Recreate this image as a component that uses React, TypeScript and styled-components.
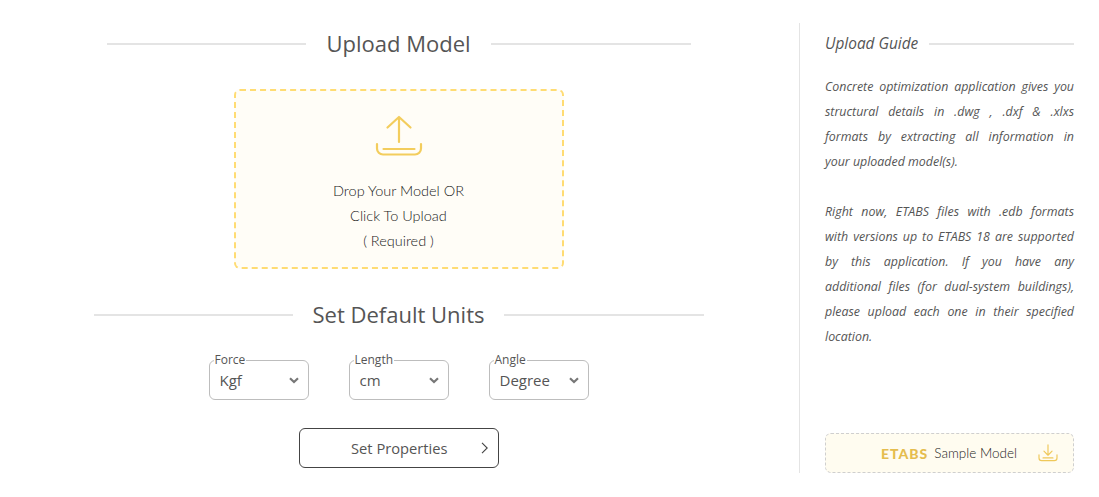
import * as React from 'react';
import styled, { createGlobalStyle } from 'styled-components';

const GlobalStyle = createGlobalStyle`
  html, body { margin: 0; padding: 0; background: #fff; }
  body { font-family: "Open Sans", "Liberation Sans", sans-serif; color: #555; }
  * { box-sizing: border-box; }
`;

const Page = styled.div`
  width: 1099px;
  height: 497px;
  display: flex;
  align-items: flex-start;
  padding-top: 23px;
`;

const Main = styled.main`
  width: 799px;
  height: 450px;
  padding-right: 2px;
  display: flex;
  flex-direction: column;
  align-items: center;
`;

const Heading = styled.div<{ $width: number; $top: number }>`
  width: ${(p) => p.$width}px;
  height: 42px;
  margin-top: ${(p) => p.$top}px;
  display: flex;
  align-items: center;
  justify-content: center;
  gap: 20px;
  color: #555;
  white-space: nowrap;
  &::before,
  &::after {
    content: '';
    flex: 1;
    height: 2px;
    background: #e4e4e4;
  }
`;

const HeadingText = styled.span`
  margin-top: -2px;
  font-size: 22px;
  line-height: 40px;
`;

const DropZone = styled.div`
  width: 330px;
  height: 180px;
  margin-top: 24px;
  padding-top: 24px;
  display: flex;
  flex-direction: column;
  align-items: center;
  background: #fffdf7;
  border: 2px dashed #ffdc73;
  border-radius: 6px;
`;

const DropText = styled.div`
  margin-top: 21px;
  font-family: "Lato", "Liberation Sans", sans-serif;
  font-size: 14.5px;
  font-weight: 300;
  line-height: 25px;
  color: #222;
  text-align: center;
`;

const SelectRow = styled.div`
  display: flex;
  gap: 40px;
  margin-top: 24px;
`;

const SelectBox = styled.div`
  position: relative;
  width: 100px;
  height: 40px;
  display: flex;
  align-items: center;
  justify-content: space-between;
  padding: 0 9px 0 10px;
  border: 1px solid #bdbdbd;
  border-radius: 6px;
  font-size: 15px;
  color: #555;
`;

const SelectLabel = styled.span`
  position: absolute;
  top: -9px;
  left: 4px;
  padding: 0 1px;
  background: #fff;
  font-size: 12px;
  line-height: 15px;
  color: #555;
`;

const SetButton = styled.button`
  width: 200px;
  height: 40px;
  margin-top: 28px;
  padding: 0 10px 0 0;
  display: flex;
  align-items: center;
  justify-content: flex-end;
  gap: 33px;
  background: #fff;
  border: 1px solid #444;
  border-radius: 6px;
  font-family: inherit;
  font-size: 14.7px;
  color: #555;
`;

const Guide = styled.aside`
  width: 275px;
  height: 450px;
  padding-left: 25px;
  display: flex;
  flex-direction: column;
  border-left: 1px solid #e4e4e4;
`;

const GuideTitle = styled.div`
  height: 42px;
  margin-top: -1px;
  display: flex;
  align-items: center;
  gap: 11px;
  font-size: 15.4px;
  font-style: italic;
  color: #555;
  white-space: nowrap;
  &::after {
    content: '';
    flex: 1;
    height: 2px;
    margin-top: 2px;
    background: #e4e4e4;
  }
`;

const GuideText = styled.p<{ $top: number }>`
  margin: ${(p) => p.$top}px 0 0;
  font-size: 12.4px;
  font-style: italic;
  line-height: 25px;
  color: #555;
`;

const GuideLine = styled.span<{ $last?: boolean }>`
  display: block;
  white-space: nowrap;
  text-align: ${(p) => (p.$last ? 'left' : 'justify')};
  text-align-last: ${(p) => (p.$last ? 'left' : 'justify')};
`;

const SampleCard = styled.div`
  margin-top: auto;
  height: 40px;
  padding: 0 15px 0 55px;
  display: flex;
  align-items: center;
  background: #fffcf0;
  border: 1px dashed #cfcfcf;
  border-radius: 6px;
`;

const EtabsMark = styled.span`
  font-family: "Lato", "Liberation Sans", sans-serif;
  font-size: 14px;
  font-weight: 900;
  letter-spacing: 1px;
  color: #e5bd4e;
`;

const SampleText = styled.span`
  margin-left: 6px;
  flex: 1;
  font-family: "Lato", "Liberation Sans", sans-serif;
  font-size: 13.5px;
  font-weight: 300;
  color: #222;
`;

const UploadIcon = () => (
  <svg width="48" height="42" viewBox="0 0 48 42" fill="none" stroke="#f3cd5d" strokeWidth="2.2" strokeLinecap="round" strokeLinejoin="round">
    <path d="M24 27V2M12.500 12.500 24 2l11.500 10.500" />
    <path d="M2 29v4.500a6 6 0 0 0 6 6h32a6 6 0 0 0 6-6V29" />
    <path d="M8.500 34h31" />
  </svg>
);

const DownloadIcon = () => (
  <svg width="20" height="18" viewBox="0 0 22 20" fill="none" stroke="#efc85a" strokeWidth="1.3" strokeLinecap="round" strokeLinejoin="round">
    <path d="M11 1v11M6.500 8 11 12.500 15.500 8" />
    <path d="M1 12v3.500A3 3 0 0 0 4 18.500h14a3 3 0 0 0 3-3V12" />
    <path d="M5.500 15.500h11" />
  </svg>
);

const Caret = () => (
  <svg width="10" height="7" viewBox="0 0 10 7" fill="none" stroke="#777" strokeWidth="2.200">
    <path d="M1 1.200 5 5l4-3.800" />
  </svg>
);

const Chevron = () => (
  <svg width="7" height="12" viewBox="0 0 7 12" fill="none" stroke="#444" strokeWidth="1.100">
    <path d="M1 .8 6.200 6 1 11.200" />
  </svg>
);

const units = [
  { label: 'Force', value: 'Kgf' },
  { label: 'Length', value: 'cm' },
  { label: 'Angle', value: 'Degree' },
];

const guideParagraphs = [
  [
    'Concrete optimization application gives you',
    'structural details in .dwg , .dxf & .xlxs',
    'formats by extracting all information in',
    'your uploaded model(s).',
  ],
  [
    'Right now, ETABS files with .edb formats',
    'with versions up to ETABS 18 are supported',
    'by this application. If you have any',
    'additional files (for dual-system buildings),',
    'please upload each one in their specified',
    'location.',
  ],
];

export default function App() {
  return (
    <Page>
      <GlobalStyle />
      <Main>
        <Heading $width={584} $top={0}>
          <HeadingText>Upload Model</HeadingText>
        </Heading>
        <DropZone>
          <UploadIcon />
          <DropText>
            Drop Your Model OR
            <br />
            Click To Upload
            <br />( Required )
          </DropText>
        </DropZone>
        <Heading $width={610} $top={25}>
          <HeadingText>Set Default Units</HeadingText>
        </Heading>
        <SelectRow>
          {units.map((u) => (
            <SelectBox key={u.label}>
              <SelectLabel>{u.label}</SelectLabel>
              {u.value}
              <Caret />
            </SelectBox>
          ))}
        </SelectRow>
        <SetButton>
          Set Properties
          <Chevron />
        </SetButton>
      </Main>
      <Guide>
        <GuideTitle>Upload Guide</GuideTitle>
        {guideParagraphs.map((lines, i) => (
          <GuideText key={i} $top={i === 0 ? 10 : 25}>
            {lines.map((line, j) => (
              <GuideLine key={j} $last={j === lines.length - 1}>
                {line}
              </GuideLine>
            ))}
          </GuideText>
        ))}
        <SampleCard>
          <EtabsMark>ETABS</EtabsMark>
          <SampleText>Sample Model</SampleText>
          <DownloadIcon />
        </SampleCard>
      </Guide>
    </Page>
  );
}
